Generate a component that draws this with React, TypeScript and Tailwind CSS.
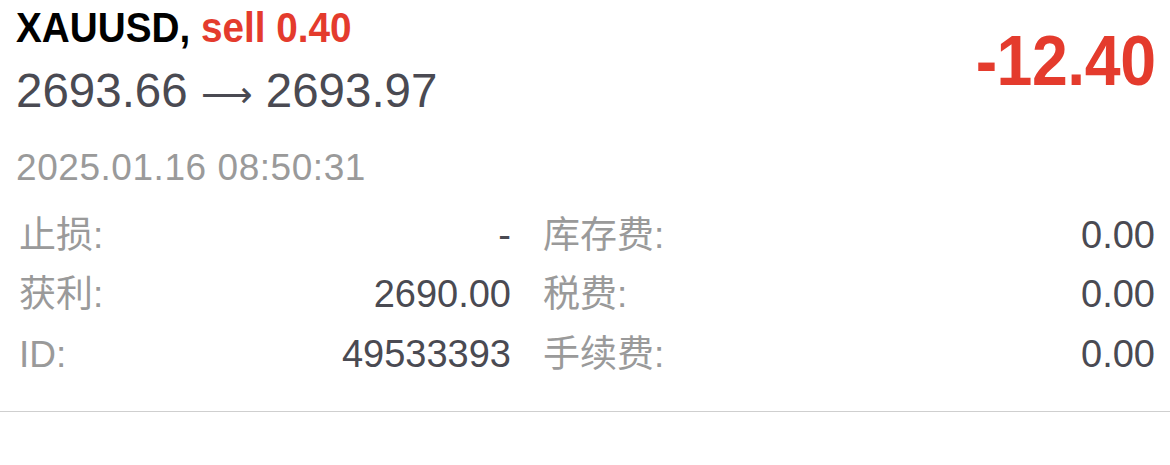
const font = { fontFamily: '"Liberation Sans", "Noto Sans CJK SC", Arial, sans-serif' };

const rows = [
  { l1: '止损:', v1: '-', l2: '库存费:', v2: '0.00' },
  { l1: '获利:', v1: '2690.00', l2: '税费:', v2: '0.00' },
  { l1: 'ID:', v1: '49533393', l2: '手续费:', v2: '0.00' },
];

export default function App() {
  return (
    <div className="w-[1170px] h-[465px] bg-white overflow-hidden" style={font}>
      <div className="pl-4 pr-[15px]">
        <div className="flex justify-between">
          <div>
            <div className="mt-[6px] text-[43px] leading-none font-bold whitespace-nowrap origin-left scale-x-[0.9]">
              <span className="text-black">XAUUSD,</span>{' '}
              <span className="text-[#e43b2d]">sell 0.40</span>
            </div>
            <div className="mt-[18px] text-[47.5px] leading-none text-[#4a4a52] whitespace-nowrap">
              2693.66{' '}
              <span className="font-['DejaVu_Sans'] text-[36px]">⟶</span>{' '}
              2693.97
            </div>
          </div>
          <div className="mt-[26px] text-[70px] leading-none font-bold tracking-[-0.5px] text-[#e43b2d] origin-right scale-x-[0.92]">
            -12.40
          </div>
        </div>
        <div className="mt-[34px] text-[37px] leading-none tracking-[0.55px] text-[#9a9a9a]">
          2025.01.16 08:50:31
        </div>
        <div className="mt-[30px] grid grid-cols-[495px_1fr] gap-x-[30px]">
          {rows.map(r => (
            <div key={r.l1} className="contents">
              <div className="flex items-baseline justify-between h-[59.5px] text-[38px] leading-none">
                <span className="pl-[3px] text-[#9a9a9a] text-[37px]">{r.l1}</span>
                <span className="text-[#4a4a52]">{r.v1}</span>
              </div>
              <div className="flex items-baseline justify-between h-[59.5px] text-[38px] leading-none">
                <span className="pl-[2px] text-[#9a9a9a] text-[37px]">{r.l2}</span>
                <span className="text-[#4a4a52]">{r.v2}</span>
              </div>
            </div>
          ))}
        </div>
      </div>
      <div className="mt-[17px] h-px bg-[#cfcfcf]" />
    </div>
  );
}
